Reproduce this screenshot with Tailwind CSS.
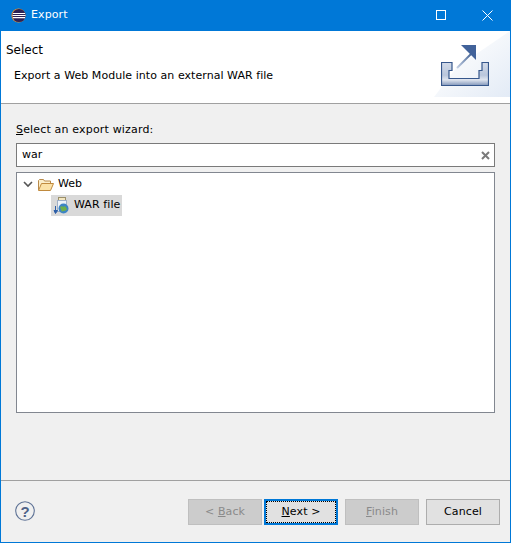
<!DOCTYPE html>
<html lang="en">
<head>
  <meta charset="UTF-8" />
  <title>Export</title>
  <script src="https://cdn.jsdelivr.net/npm/@tailwindcss/browser@4"></script>
</head>
<body class="bg-[#f0f0f0] overflow-hidden">
  <div class="w-[511px] h-[543px] flex flex-col border border-[#0078d7] font-['DejaVu_Sans',sans-serif] text-[11px] text-black">
    <!-- title bar -->
    <div class="h-[30px] shrink-0 bg-[#0078d7] flex items-center text-white pb-[2px]">
      <svg class="ml-[10px] w-[15px] h-[15px]" viewBox="0 0 16 16">
        <circle cx="8" cy="8" r="7.5" fill="#e8912c" />
        <circle cx="8.5" cy="8" r="7" fill="#2c2255" />
        <path d="M2 5.8h13M1.5 8h14M2 10.2h13" stroke="#fff" stroke-width="1.2" />
      </svg>
      <span class="ml-[5px] text-[11px] tracking-[0.1px]">Export</span>
      <svg class="ml-auto w-[10px] h-[10px]" viewBox="0 0 10 10" fill="none" stroke="#fff"><rect x="0.5" y="0.5" width="9" height="9" /></svg>
      <svg class="ml-[36px] mr-[17px] w-[11px] h-[11px]" viewBox="0 0 11 11" fill="none" stroke="#fff"><path d="M0.5 0.5l10 10M10.5 0.5l-10 10" /></svg>
    </div>

    <!-- banner -->
    <div class="h-[73px] shrink-0 bg-white border-b border-[#a0a0a0] relative flex flex-col overflow-hidden">
      <div class="absolute right-0 top-0 w-[76px] h-[66px] bg-gradient-to-br from-white via-[#f4f7fb] to-[#e3ebf6] [clip-path:polygon(100%_0,100%_100%,0_100%,30%_55%)]"></div>
      <div class="pl-[5px] pt-[11px] text-[12px] leading-[16px]">Select</div>
      <div class="pl-[13px] pt-[10px] leading-[16px] tracking-[0.05px]">Export a Web Module into an external WAR file</div>
      <svg class="absolute left-[440px] top-[14px] w-[48px] h-[42px]" viewBox="0 0 48 42">
        <defs>
          <linearGradient id="tray" x1="0" y1="0" x2="0" y2="1">
            <stop offset="0" stop-color="#d3dbe9" />
            <stop offset="0.55" stop-color="#b9c6dc" />
            <stop offset="0.75" stop-color="#dfe5ef" />
            <stop offset="1" stop-color="#8297bb" />
          </linearGradient>
          <linearGradient id="arrow" x1="0" y1="1" x2="1" y2="0">
            <stop offset="0" stop-color="#c4d0e4" />
            <stop offset="1" stop-color="#3f5f92" />
          </linearGradient>
        </defs>
        <path d="M0.5 17.5h10.5v8h-3v8h30v-8h3v-8h6.5v23h-47z" fill="url(#tray)" stroke="#36578c" stroke-width="1.2" />
        <path d="M16 23L31 8" stroke="url(#arrow)" stroke-width="2" />
        <path d="M20 0h15v15z" fill="#41629a" />
      </svg>
    </div>

    <!-- content -->
    <div class="flex-1 flex flex-col px-[15px]">
      <div class="mt-[18px] leading-[16px] tracking-[0.17px]"><span class="underline">S</span>elect an export wizard:</div>
      <div class="mt-[5px] w-[479px] h-[24px] bg-white border border-[#7a7a7a] flex items-center pl-[5px] pr-[4px]">
        <span>war</span>
        <svg class="ml-auto w-[9px] h-[9px]" viewBox="0 0 9 9" stroke="#7a7a7a" stroke-width="2"><path d="M1 1l7 7M8 1l-7 7" /></svg>
      </div>
      <div class="mt-[5px] w-[479px] h-[241px] bg-white border border-[#828790] pt-[2px]">
        <div class="h-[20px] flex items-center pb-[1px]">
          <svg class="ml-[6px] w-[10px] h-[7px]" viewBox="0 0 10 7" fill="none" stroke="#555" stroke-width="1.6"><path d="M1 1l4 4 4-4" /></svg>
          <svg class="ml-[5px] w-[16px] h-[13px]" viewBox="0 0 16 13">
            <path d="M0.5 12V2.5l1-1h4l1 1.5h6v2" fill="#fbeecb" stroke="#b98a4a" />
            <path d="M0.5 12.5l3-7h12l-3 7z" fill="#fbe2a8" stroke="#c08a3e" />
          </svg>
          <span class="ml-[4px]">Web</span>
        </div>
        <div class="ml-[34px] w-[71px] h-[21px] bg-[#d9d9d9] flex items-center whitespace-nowrap">
          <svg class="ml-[2px] w-[17px] h-[18px] shrink-0" viewBox="0 0 17 18">
            <rect x="5.5" y="0.5" width="7" height="3" fill="#f3e6c0" stroke="#9a8f6a" />
            <rect x="4.5" y="3.5" width="9" height="11" fill="#eef3fa" stroke="#9fb0c8" />
            <circle cx="10.5" cy="11.5" r="5" fill="#3d84c4" />
            <path d="M7 10c2-2 3 1 5-1l2 3c-2 3-4 1-5 3z" fill="#6fb04a" />
            <path d="M2.5 9v5M1 13.5l1.5 3 2-3z" fill="#2c5ea8" stroke="#2c5ea8" />
          </svg>
          <span class="ml-[4px] tracking-[0.1px]">WAR file</span>
        </div>
      </div>
    </div>

    <!-- button bar -->
    <div class="h-[62px] shrink-0 border-t border-[#a0a0a0] flex items-start pt-[18px] pl-[14px] pr-[10px]">
      <svg class="w-[20px] h-[20px] mt-[2px]" viewBox="0 0 20 20">
        <circle cx="10" cy="10" r="9.3" fill="none" stroke="#5f7396" stroke-width="1.1" />
        <text x="10" y="15.5" text-anchor="middle" font-size="15" font-weight="700" fill="#4f6288" font-family="Liberation Sans">?</text>
      </svg>
      <button class="ml-auto w-[74px] h-[26px] bg-[#cccccc] border border-[#bfbfbf] text-[#8a8a8a] tracking-[0.1px]">&lt; <span class="underline">B</span>ack</button>
      <button class="ml-[2px] w-[74px] h-[26px] bg-[#e1e1e1] border-2 border-[#0078d7] outline-1 outline-dotted outline-black -outline-offset-3 tracking-[0.1px]">
        <span class="underline">N</span>ext &gt;
      </button>
      <button class="ml-[7px] w-[74px] h-[26px] bg-[#cccccc] border border-[#bfbfbf] text-[#8a8a8a] tracking-[0.1px]"><span class="underline">F</span>inish</button>
      <button class="ml-[7px] w-[74px] h-[26px] bg-[#e1e1e1] border border-[#adadad] tracking-[0.1px]">Cancel</button>
    </div>
  </div>
</body>
</html>
